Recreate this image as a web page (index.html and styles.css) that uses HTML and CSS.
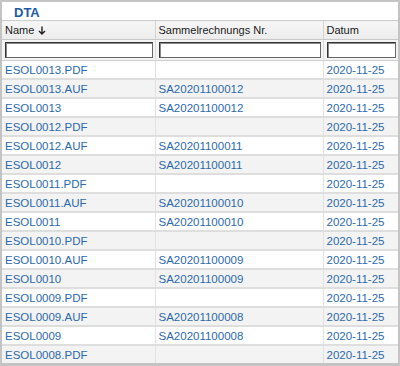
FILE: index.html
```html
<!DOCTYPE html>
<html>
<head>
<meta charset="utf-8">
<link rel="stylesheet" href="styles.css">
</head>
<body>
<div class="frame">
  <div class="title">DTA</div>
  <table class="grid">
    <colgroup><col class="c1"><col class="c2"><col class="c3"></colgroup>
    <thead>
      <tr class="head">
        <th>Name <svg class="arrow" width="8" height="9" viewBox="0 0 8 9"><path d="M4 0.5V8M1 5L4 8L7 5" fill="none" stroke="#222" stroke-width="1.4"/></svg></th>
        <th>Sammelrechnungs Nr.</th>
        <th>Datum</th>
      </tr>
      <tr class="filter">
        <td><input type="text"></td>
        <td><input type="text"></td>
        <td><input type="text"></td>
      </tr>
    </thead>
    <tbody>
      <tr><td>ESOL0013.PDF</td><td></td><td>2020-11-25</td></tr>
      <tr><td>ESOL0013.AUF</td><td>SA20201100012</td><td>2020-11-25</td></tr>
      <tr><td>ESOL0013</td><td>SA20201100012</td><td>2020-11-25</td></tr>
      <tr><td>ESOL0012.PDF</td><td></td><td>2020-11-25</td></tr>
      <tr><td>ESOL0012.AUF</td><td>SA20201100011</td><td>2020-11-25</td></tr>
      <tr><td>ESOL0012</td><td>SA20201100011</td><td>2020-11-25</td></tr>
      <tr><td>ESOL0011.PDF</td><td></td><td>2020-11-25</td></tr>
      <tr><td>ESOL0011.AUF</td><td>SA20201100010</td><td>2020-11-25</td></tr>
      <tr><td>ESOL0011</td><td>SA20201100010</td><td>2020-11-25</td></tr>
      <tr><td>ESOL0010.PDF</td><td></td><td>2020-11-25</td></tr>
      <tr><td>ESOL0010.AUF</td><td>SA20201100009</td><td>2020-11-25</td></tr>
      <tr><td>ESOL0010</td><td>SA20201100009</td><td>2020-11-25</td></tr>
      <tr><td>ESOL0009.PDF</td><td></td><td>2020-11-25</td></tr>
      <tr><td>ESOL0009.AUF</td><td>SA20201100008</td><td>2020-11-25</td></tr>
      <tr><td>ESOL0009</td><td>SA20201100008</td><td>2020-11-25</td></tr>
      <tr><td>ESOL0008.PDF</td><td></td><td>2020-11-25</td></tr>
    </tbody>
  </table>
</div>
</body>
</html>
```

FILE: styles.css
```css
html, body {
  margin: 0;
  padding: 0;
  background: #ffffff;
}
.frame {
  width: 400px;
  height: 366px;
  box-sizing: border-box;
  border: 2px solid #c4c4c4;
  border-bottom-width: 3px;
  overflow: hidden;
  font-family: "Liberation Sans", Arial, sans-serif;
  font-size: 11.5px;
  background: #fff;
}
.title {
  height: 18px;
  padding-left: 12px;
  font-weight: bold;
  font-size: 13px;
  line-height: 22px;
  color: #1c5ca6;
}
.grid {
  width: 396px;
  border-collapse: collapse;
  table-layout: fixed;
}
.c1 { width: 153px; }
.c2 { width: 168px; }
.c3 { width: 75px; }
.head th {
  height: 18px;
  padding: 0 0 0 3px;
  text-align: left;
  font-weight: normal;
  font-size: 11px;
  color: #1a1a1a;
  background: linear-gradient(#f6f6f6, #ececec);
  border-top: 1px solid #cfcfcf;
  border-bottom: 1px solid #c8c8c8;
  border-left: 1px solid #d4d4d4;
  white-space: nowrap;
}
.head th:first-child { border-left: none; }
.arrow { vertical-align: -1px; margin-left: 1px; }
.filter td {
  height: 20px;
  padding: 0 2px 0 3px;
  background: #f4f4f4;
  border-left: 1px solid #dcdcdc;
  border-bottom: 1px solid #d0d0d0;
}
.filter td:first-child { border-left: none; }
.filter input {
  display: block;
  box-sizing: border-box;
  width: 100%;
  height: 16px;
  margin: 0;
  padding: 0;
  border: 1px solid #333;
  border-bottom-color: #666;
  border-right-color: #666;
  box-shadow: inset 1px 1px 0 #8a8a8a;
  background: #fff;
}
tbody td {
  height: 17px;
  padding: 0 0 0 3px;
  color: #2c6aad;
  border-bottom: 2px solid #dedede;
  border-left: 1px solid #e2e2e2;
  white-space: nowrap;
  overflow: hidden;
}
tbody td:first-child { border-left: none; }
tbody tr:nth-child(even) td { background: #f3f3f3; }
```
